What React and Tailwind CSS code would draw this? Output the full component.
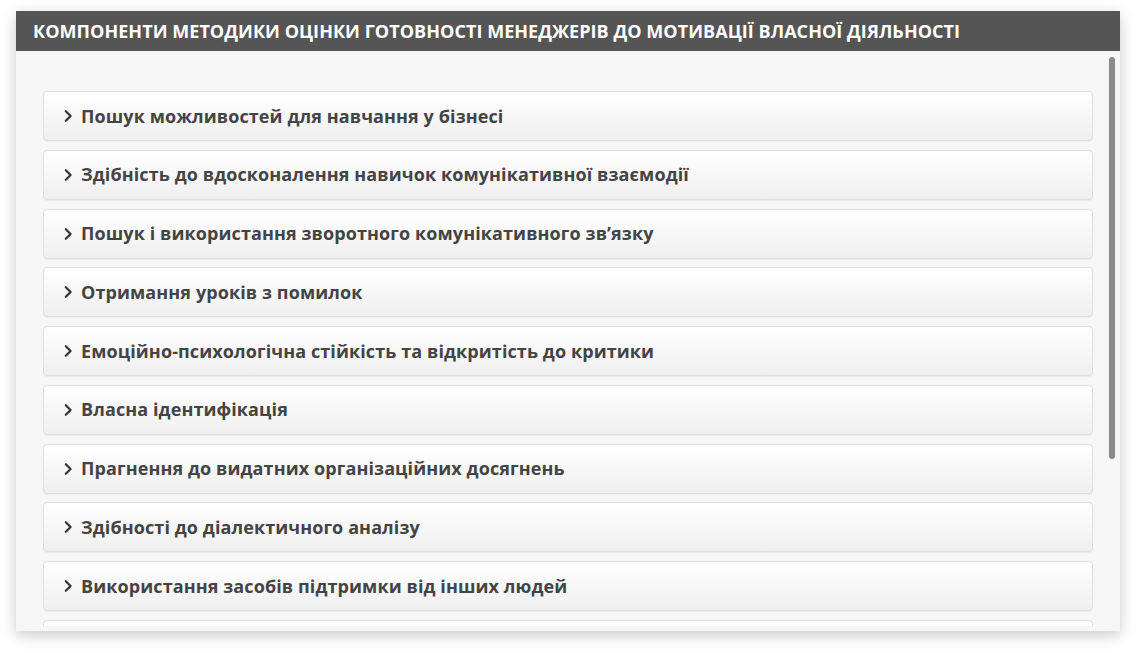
import React from "react";

const ITEMS = [
  "Пошук можливостей для навчання у бізнесі",
  "Здібність до вдосконалення навичок комунікативної взаємодії",
  "Пошук і використання зворотного комунікативного зв’язку",
  "Отримання уроків з помилок",
  "Емоційно-психологічна стійкість та відкритість до критики",
  "Власна ідентифікація",
  "Прагнення до видатних організаційних досягнень",
  "Здібності до діалектичного аналізу",
  "Використання засобів підтримки від інших людей",
];

function Chevron() {
  return (
    <svg width="10" height="14" viewBox="0 0 10 14" className="shrink-0">
      <path d="M2.8 2.2 L7.6 7 L2.8 11.8" fill="none" stroke="#333" strokeWidth="2.2" strokeLinecap="round" strokeLinejoin="round" />
    </svg>
  );
}

export default function App() {
  return (
    <div className="w-[1136px] h-[653px] bg-white pt-[11px] pl-4" style={{ fontFamily: "'Open Sans', 'Noto Sans', sans-serif" }}>
      <div className="w-[1104px] h-[620px] flex flex-col bg-[#f6f6f6] shadow-[0_4px_14px_rgba(0,0,0,0.22)]">
        {/* Header */}
        <div className="h-10 shrink-0 bg-[#555555] flex items-center pl-[17px]">
          <h1 className="text-white text-[18px] font-bold tracking-[0.05px]">
            КОМПОНЕНТИ МЕТОДИКИ ОЦІНКИ ГОТОВНОСТІ МЕНЕДЖЕРІВ ДО МОТИВАЦІЇ ВЛАСНОЇ ДІЯЛЬНОСТІ
          </h1>
        </div>

        {/* Body */}
        <div className="relative flex-1 min-h-0 pb-[5px]">
          <div className="h-full overflow-hidden px-[27px] pt-10 flex flex-col gap-[8.75px]">
            {ITEMS.map(t => (
              <div key={t}
                className="h-[50px] shrink-0 flex items-center gap-[8px] pl-[19px] rounded-[4px] border border-[#dedede] bg-gradient-to-b from-white to-[#efefef] shadow-[0_1px_1px_rgba(0,0,0,0.04)]">
                <Chevron />
                <span className="text-[18px] font-bold text-[#444444] tracking-[0.1px]">{t}</span>
              </div>
            ))}
            {/* next item, scrolled out of view */}
            <div className="h-[50px] shrink-0 rounded-[4px] border border-[#dedede] bg-gradient-to-b from-white to-[#efefef]" />
          </div>
          {/* Scrollbar */}
          <div className="absolute right-[5px] top-[6px] w-[6px] h-[402px] rounded-full bg-[#8a8a8a]" />
        </div>
      </div>
    </div>
  );
}
